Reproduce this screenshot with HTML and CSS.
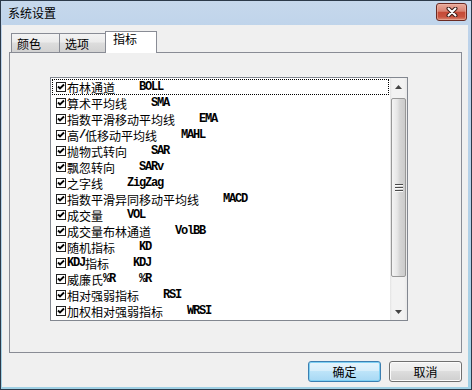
FILE: index.html
```html
<!DOCTYPE html>
<html lang="zh-CN">
  <head>
    <meta charset="utf-8">
    <title>系统设置</title>
    <link rel="stylesheet" href="styles.css">
  </head>
  <body>
    <div class="window">
      <div class="titlebar">
        <span class="title">系统设置</span>
        <div class="close">
          <svg width="12" height="10" viewBox="0 0 12 10">
            <path d="M2.5 1.5 L9.5 8.5 M9.5 1.5 L2.5 8.5" stroke="#3a1d18" stroke-width="4" stroke-linecap="round"/>
            <path d="M2.5 1.5 L9.5 8.5 M9.5 1.5 L2.5 8.5" stroke="#fff" stroke-width="2" stroke-linecap="round"/>
          </svg>
        </div>
      </div>
      <div class="client">
        <div class="tabs">
          <div class="tab first">颜色</div>
          <div class="tab">选项</div>
          <div class="tab active">指标</div>
        </div>
        <div class="panel">
          <div class="listbox">
            <ul class="items">
              <li class="item focus"><i class="check"></i>布林通道<span class="code">    BOLL</span></li>
              <li class="item"><i class="check"></i>算术平均线<span class="code">    SMA</span></li>
              <li class="item"><i class="check"></i>指数平滑移动平均线<span class="code">    EMA</span></li>
              <li class="item"><i class="check"></i>高<span class="code">/</span>低移动平均线<span class="code">    MAHL</span></li>
              <li class="item"><i class="check"></i>抛物式转向<span class="code">    SAR</span></li>
              <li class="item"><i class="check"></i>飘忽转向<span class="code">    SARv</span></li>
              <li class="item"><i class="check"></i>之字线<span class="code">    ZigZag</span></li>
              <li class="item"><i class="check"></i>指数平滑异同移动平均线<span class="code">    MACD</span></li>
              <li class="item"><i class="check"></i>成交量<span class="code">    VOL</span></li>
              <li class="item"><i class="check"></i>成交量布林通道<span class="code">    VolBB</span></li>
              <li class="item"><i class="check"></i>随机指标<span class="code">    KD</span></li>
              <li class="item"><i class="check"></i><span class="code">KDJ</span>指标<span class="code">    KDJ</span></li>
              <li class="item"><i class="check"></i>威廉氏<span class="code">%R    %R</span></li>
              <li class="item"><i class="check"></i>相对强弱指标<span class="code">    RSI</span></li>
              <li class="item"><i class="check"></i>加权相对强弱指标<span class="code">    WRSI</span></li>
            </ul>
            <div class="scrollbar">
              <div class="arrow">
                <svg width="7" height="4" viewBox="0 0 7 4"><path d="M0 4 L3.5 0 L7 4 Z" fill="#444"/></svg>
              </div>
              <div class="track">
                <div class="thumb">
                  <svg width="8" height="8" viewBox="0 0 8 8">
                    <path d="M0 0.5 H8 M0 3.5 H8 M0 6.5 H8" stroke="#4a4a4a" stroke-width="1"/>
                    <path d="M0 1.5 H8 M0 4.5 H8 M0 7.5 H8" stroke="#fafafa" stroke-width="1"/>
                  </svg>
                </div>
              </div>
              <div class="arrow">
                <svg width="7" height="4" viewBox="0 0 7 4"><path d="M0 0 L7 0 L3.5 4 Z" fill="#444"/></svg>
              </div>
            </div>
          </div>
        </div>
        <div class="actions">
          <button class="btn default">确定</button>
          <button class="btn">取消</button>
        </div>
      </div>
    </div>
  </body>
</html>
```

FILE: styles.css
```css
* {
  box-sizing: border-box;
}
body {
  margin: 0;
  font-family: "Noto Sans CJK SC", "Noto Sans", sans-serif;
  font-size: 12px;
  color: #000;
}
.window {
  width: 472px;
  height: 390px;
  border: 1px solid #2c3a4a;
  background: linear-gradient(#c6d8ec, #bcd2ea 10%, #b2d1e8 60%, #9fd0e4);
  padding: 0 3px 2px 1px;
  display: flex;
  flex-direction: column;
}
.titlebar {
  height: 24px;
  flex: none;
  display: flex;
  justify-content: space-between;
  padding-left: 6px;
}
.title {
  line-height: 24px;
}
.close {
  width: 31px;
  height: 18px;
  margin-top: 2px;
  margin-right: 1px;
  border: 1px solid #6b2a22;
  border-radius: 3px;
  background: linear-gradient(#e9ab9c, #d98373 45%, #c54a37 52%, #c9533f 80%, #da8a74);
  box-shadow: inset 0 0 0 1px #f0b9aa88;
  display: flex;
  align-items: center;
  justify-content: center;
}
.client {
  flex: 1;
  background: #f0f0f0;
  padding: 6px 6px 0 7px;
}
.tabs {
  display: flex;
  align-items: flex-end;
  height: 22px;
  padding-left: 2px;
  margin-bottom: -1px;
  position: relative;
  z-index: 1;
}
.tab {
  height: 19px;
  width: 47px;
  margin-bottom: 1px;
  padding: 2px 0 0 5px;
  line-height: 16px;
  border: 1px solid #898c95;
  border-bottom: none;
  background: linear-gradient(#f3f3f3, #ebebeb 45%, #dddddd 50%, #d2d2d2);
}
.tab.first {
  width: 48px;
  border-right: none;
}
.tab.active {
  width: 52px;
  height: 22px;
  margin-bottom: 0;
  margin-left: -1px;
  padding: 1px 0 0 7px;
  line-height: 12px;
  background: #fff;
}
.panel {
  width: 453px;
  height: 301px;
  border: 1px solid #898c95;
  background: #f0f0f0;
  padding: 24px 0 0 40px;
}
.listbox {
  width: 358px;
  height: 244px;
  border: 1px solid #828790;
  background: #fff;
  display: flex;
}
.items {
  flex: 1;
  list-style: none;
  margin: 0;
  padding: 1px;
}
.item {
  height: 16px;
  display: flex;
  align-items: center;
  padding-left: 4px;
  white-space: pre;
}
.item.focus {
  outline: 1px dotted #000;
  outline-offset: -1px;
}
.check {
  width: 10px;
  height: 10px;
  margin-right: 1px;
  border: 1px solid #222;
  background: #fff url("data:image/svg+xml,%3Csvg xmlns='http://www.w3.org/2000/svg' width='8' height='8'%3E%3Cpath d='M1 3.5 L3 5.5 L7 1.5' stroke='%23000' stroke-width='1.8' fill='none'/%3E%3C/svg%3E") no-repeat center;
}
.code {
  font-family: "Liberation Mono", monospace;
  font-weight: bold;
  font-size: 12px;
  letter-spacing: -1.2px;
}
.scrollbar {
  width: 17px;
  display: flex;
  flex-direction: column;
  background: linear-gradient(90deg, #e3e3e3, #f2f2f2 2px, #f2f2f2 14px, #e8e8e8);
}
.arrow {
  height: 17px;
  display: flex;
  align-items: center;
  justify-content: center;
}
.track {
  flex: 1;
  padding: 3px 1px;
}
.thumb {
  height: 179px;
  border: 1px solid #979797;
  border-radius: 2px;
  background: linear-gradient(90deg, #f4f4f4, #e6e6e6 40%, #d5d5d5 60%, #cbcbcb);
  display: flex;
  align-items: center;
  justify-content: center;
}
.actions {
  display: flex;
  justify-content: flex-end;
  gap: 8px;
  margin-top: 8px;
}
.btn {
  width: 73px;
  height: 21px;
  padding: 0;
  font: inherit;
  border: 1px solid #707070;
  border-radius: 3px;
  background: linear-gradient(#f2f2f2, #ebebeb 45%, #dddddd 50%, #cfcfcf);
  box-shadow: inset 0 0 0 1px #fbfbfb;
}
.btn.default {
  border-color: #3c7fb1;
  background: linear-gradient(#e6f4fc, #d6eefb 45%, #bde4f9 50%, #a7d8f4);
  box-shadow: inset 0 0 0 1px #7fd0f3;
}
```
